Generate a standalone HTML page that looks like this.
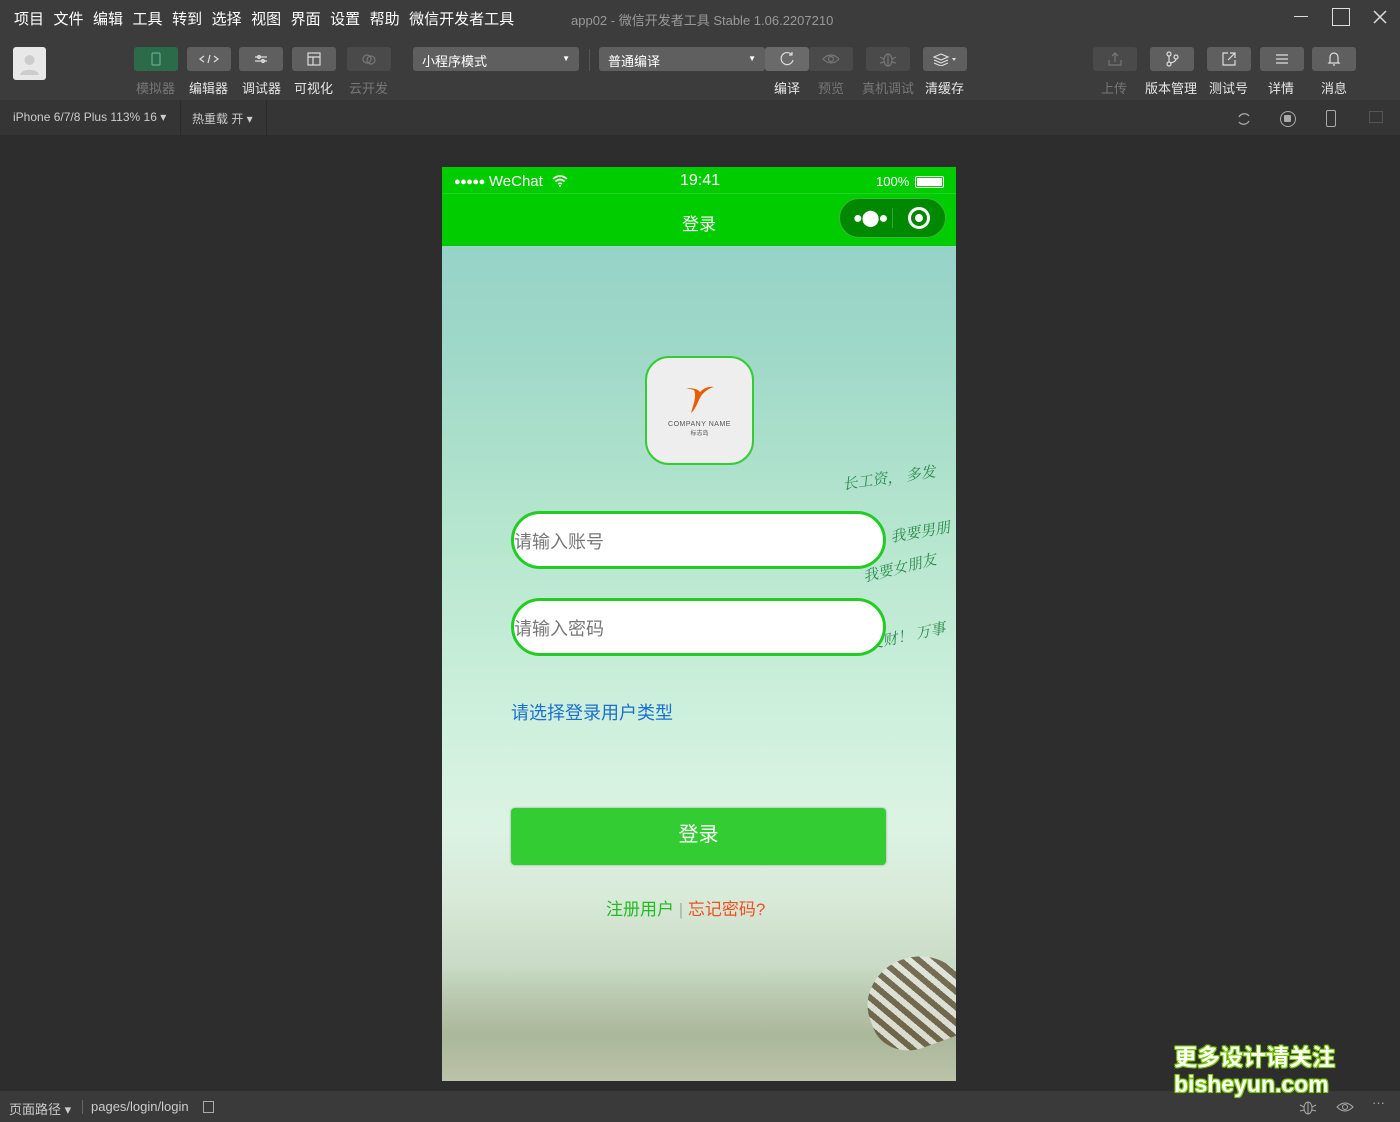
<!DOCTYPE html>
<html><head><meta charset="utf-8"><style>
*{margin:0;padding:0;box-sizing:border-box}
body{width:1400px;height:1122px;background:#2d2d2d;font-family:"Liberation Sans","Noto Sans CJK SC",sans-serif;position:relative;overflow:hidden;color:#ddd}
.abs{position:absolute}
#top{left:0;top:0;width:1400px;height:100px;background:#3c3c3c}
#menu{left:14px;top:8px;font-size:15px;color:#fff;white-space:nowrap}
#menu span{margin-right:9.5px}
#title{left:571px;top:10px;font-size:13px;color:#999}
.tb{position:absolute;top:47px;width:44px;height:24px;background:#5f5f5f;border-radius:3px;display:flex;align-items:center;justify-content:center}
.tb svg{stroke:#ddd;fill:none;stroke-width:1.2}
.d svg{stroke:#777}
.tl{position:absolute;top:78px;font-size:13px;color:#e6e6e6;white-space:nowrap}
.dim{color:#777}
.sel{position:absolute;top:47px;height:24px;background:#5f5f5f;border-radius:3px;font-size:13px;color:#fff;padding:4px 9px}
#sub{left:0;top:100px;width:1400px;height:35px;background:#353535;font-size:12px;color:#ccc}
#status{left:0;top:1091px;width:1400px;height:31px;background:#3a3a3a;font-size:13px;color:#ccc}
#phone{left:442px;top:167px;width:514px;height:914px;overflow:hidden;
background:linear-gradient(180deg,#8fcfc6 0%,#9fd8c8 20%,#b6e6cf 40%,#cdf0dc 60%,#dcf3e4 72%,#d8ead8 80%,#c4d6bf 90%,#b3c2a6 100%)}
#phone .hdr{left:0;top:0;width:514px;height:79px;background:#00cc00;color:#fff}
.inp{position:absolute;left:69px;width:375px;height:58px;background:#fff;border:3px solid #22cc22;border-radius:30px;font-size:18px;color:#777;padding:14px 0 0 0}
.cal{position:absolute;color:#2a8a4a;font-size:15px;font-style:italic;font-family:"Noto Serif CJK SC",serif;white-space:nowrap}
</style></head><body>
<div id="top" class="abs"></div>
<div id="menu" class="abs"><span>项目</span><span>文件</span><span>编辑</span><span>工具</span><span>转到</span><span>选择</span><span>视图</span><span>界面</span><span>设置</span><span>帮助</span><span>微信开发者工具</span></div>
<div id="title" class="abs">app02 - 微信开发者工具 Stable 1.06.2207210</div>
<div class="abs" style="left:1294px;top:16px;width:14px;height:1px;background:#ddd"></div>
<div class="abs" style="left:1332px;top:8px;width:18px;height:18px;border:1.5px solid #ddd"></div>
<svg class="abs" style="left:1373px;top:10px" width="14" height="14"><path d="M1 1L13 13M13 1L1 13" stroke="#ddd" stroke-width="1.5"/></svg>
<div class="abs" style="left:13px;top:47px;width:33px;height:33px;background:#e8e8e8;border-radius:3px"><svg width="33" height="33"><circle cx="16.5" cy="13" r="5" fill="#ccc"/><path d="M7 28c1-7 18-7 19 0z" fill="#ccc"/></svg></div>
<div class="tb" style="left:134px;background:#2b6b4a"><svg width="10" height="14"><rect x="1" y="1" width="8" height="12" rx="1" stroke="#6a9"/></svg></div>
<div class="tb" style="left:187px"><svg width="20" height="10"><path d="M5 2L1 5L5 8M15 2L19 5L15 8M11 1L9 9"/></svg></div>
<div class="tb" style="left:239px"><svg width="14" height="10"><path d="M1 3H13M1 7H13"/><circle cx="5" cy="3" r="1.5"/><circle cx="9" cy="7" r="1.5"/></svg></div>
<div class="tb" style="left:292px"><svg width="14" height="14"><rect x="1" y="1" width="12" height="12"/><path d="M1 5H13M6 5V13"/></svg></div>
<div class="tb d" style="left:347px;background:#4a4a4a"><svg width="16" height="12"><circle cx="6" cy="6" r="4"/><circle cx="10" cy="7" r="4"/></svg></div>
<div class="tl dim" style="left:136px">模拟器</div>
<div class="tl" style="left:189px">编辑器</div>
<div class="tl" style="left:242px">调试器</div>
<div class="tl" style="left:294px">可视化</div>
<div class="tl dim" style="left:349px">云开发</div>
<div class="sel" style="left:413px;width:166px">小程序模式<span style="float:right;font-size:8px;margin-top:3px">▼</span></div>
<div class="abs" style="left:589px;top:49px;width:1px;height:22px;background:#555"></div>
<div class="sel" style="left:599px;width:166px">普通编译<span style="float:right;font-size:8px;margin-top:3px">▼</span></div>
<div class="tb" style="left:765px;background:#6a6a6a"><svg width="16" height="16"><path d="M13 4A6 6 0 1 0 14 9M13 1V4H10"/></svg></div>
<div class="tb d" style="left:809px;background:#4a4a4a"><svg width="18" height="12"><path d="M1 6Q9 -2 17 6Q9 14 1 6Z"/><circle cx="9" cy="6" r="2.5"/></svg></div>
<div class="tb d" style="left:866px;background:#4a4a4a"><svg width="18" height="16"><ellipse cx="9" cy="9" rx="4" ry="6"/><path d="M9 3V15M1 6L5 8M17 6L13 8M1 12L5 11M17 12L13 11"/></svg></div>
<div class="tb" style="left:923px"><svg width="26" height="14"><path d="M2 5L9 2L16 5L9 8Z M2 8L9 11L16 8 M2 11L9 14L16 11"/><path d="M20 6L24 6L22 9Z" fill="#ddd" stroke="none"/></svg></div>
<div class="tl" style="left:774px">编译</div>
<div class="tl dim" style="left:818px">预览</div>
<div class="tl dim" style="left:862px">真机调试</div>
<div class="tl" style="left:925px">清缓存</div>
<div class="tb d" style="left:1093px;background:#4a4a4a"><svg width="14" height="14"><path d="M7 10V1M4 4L7 1L10 4M1 8V13H13V8"/></svg></div>
<div class="tb" style="left:1150px"><svg width="14" height="16"><circle cx="4" cy="3" r="2"/><circle cx="4" cy="13" r="2"/><circle cx="11" cy="6" r="2"/><path d="M4 5V11M11 8Q11 11 5 12"/></svg></div>
<div class="tb" style="left:1207px"><svg width="14" height="14"><path d="M6 1H1V13H13V8M8 1H13V6M13 1L6 8"/></svg></div>
<div class="tb" style="left:1260px"><svg width="14" height="12"><path d="M1 2H13M1 6H13M1 10H13"/></svg></div>
<div class="tb" style="left:1312px"><svg width="14" height="16"><path d="M3 11V6A4 4 0 0 1 11 6V11L12 12H2Z M6 14H8"/></svg></div>
<div class="tl dim" style="left:1101px">上传</div>
<div class="tl" style="left:1145px">版本管理</div>
<div class="tl" style="left:1209px">测试号</div>
<div class="tl" style="left:1268px">详情</div>
<div class="tl" style="left:1321px">消息</div>
<div id="sub" class="abs"><span class="abs" style="left:13px;top:10px">iPhone 6/7/8 Plus 113% 16 ▾</span><span class="abs" style="left:180px;top:0;width:1px;height:35px;background:#2a2a2a"></span><span class="abs" style="left:192px;top:10px">热重载 开 ▾</span><span class="abs" style="left:266px;top:0;width:1px;height:35px;background:#2a2a2a"></span>
<svg class="abs" style="left:1236px;top:11px" width="16" height="16"><path d="M3 6A6 6 0 0 1 13 5M13 10A6 6 0 0 1 3 11" stroke="#aaa" fill="none" stroke-width="1.3"/></svg>
<span class="abs" style="left:1280px;top:11px;width:16px;height:16px;border:1.5px solid #aaa;border-radius:50%"><span style="display:block;margin:3px;width:7px;height:7px;background:#aaa;border-radius:1px"></span></span>
<span class="abs" style="left:1326px;top:10px;width:10px;height:17px;border:1.5px solid #aaa;border-radius:2px"></span>
<span class="abs" style="left:1369px;top:11px;width:14px;height:12px;border:1px solid #555"></span></div>

<div id="phone" class="abs">
 <div class="abs hdr">
  <div class="abs" style="left:12px;top:6px;font-size:15px"><span style="font-size:11px;letter-spacing:-0.5px;vertical-align:1px">●●●●●</span> WeChat</div>
  <svg class="abs" style="left:110px;top:8px" width="16" height="12"><path d="M1 4Q8 -2 15 4M3.5 6.5Q8 2.5 12.5 6.5M6 9Q8 7.5 10 9" stroke="#fff" fill="none" stroke-width="1.6"/><circle cx="8" cy="11" r="1" fill="#fff"/></svg>
  <div class="abs" style="left:238px;top:5px;font-size:16px">19:41</div>
  <div class="abs" style="left:434px;top:7px;font-size:13px">100%</div>
  <div class="abs" style="left:473px;top:9px;width:29px;height:12px;border:1.5px solid #fff;border-radius:2px;padding:1px"><div style="background:#fff;height:100%"></div></div>
  <div class="abs" style="left:0;top:26px;width:514px;height:1px;background:#22d422"></div>
  <div class="abs" style="left:240px;top:43px;font-size:17px">登录</div>
  <div class="abs" style="left:397px;top:31px;width:107px;height:40px;background:#008800;border:1px solid #33bb33;border-radius:20px">
   <div class="abs" style="left:13px;top:9px;font-size:16px;letter-spacing:-1px">●⬤●</div>
   <div class="abs" style="left:52px;top:9px;width:1px;height:20px;background:#33aa33"></div>
   <div class="abs" style="left:68px;top:8px;width:22px;height:22px;border:3px solid #fff;border-radius:50%"><div style="margin:4px;width:8px;height:8px;background:#fff;border-radius:50%"></div></div>
  </div>
 </div>
 <div class="abs" style="left:203px;top:189px;width:109px;height:109px;background:#eee;border:2px solid #33cc33;border-radius:24px;text-align:center">
  <svg width="32" height="32" style="margin-top:26px" viewBox="0 0 32 32"><path d="M2 4l8 2c2 4 1 10-1 16l-2 7c5-4 7-12 10-17 3-4 8-8 13-9-5-1-10 1-14 5-2-3-7-4-14-4z" fill="#e85d00"/></svg>
  <div style="font-size:7px;color:#555;letter-spacing:.5px">COMPANY NAME</div><div style="font-size:6px;color:#555">标志岛</div>
 </div>
 <div class="cal" style="left:400px;top:300px;transform:rotate(-8deg)">长工资， 多发</div>
 <div class="cal" style="left:448px;top:354px;transform:rotate(-10deg)">我要男朋</div>
 <div class="cal" style="left:420px;top:390px;transform:rotate(-14deg)">我要女朋友</div>
 <div class="cal" style="left:425px;top:458px;transform:rotate(-12deg)">发财！ 万事</div>
 <div class="inp" style="top:344px">请输入账号</div>
 <div class="inp" style="top:431px">请输入密码</div>
 <div class="abs" style="left:69px;top:532px;font-size:18px;color:#1a6fd0">请选择登录用户类型</div>
 <div class="abs" style="left:69px;top:641px;width:375px;height:57px;background:#33cc33;border-radius:4px;color:#fff;font-size:20px;text-align:center;line-height:55px;box-shadow:0 0 2px #999">登录</div>
 <div class="abs" style="left:164px;top:728px;font-size:17px;color:#22bb22">注册用户 <span style="color:#aaa">|</span> <span style="color:#f05020">忘记密码?</span></div>
 <div class="abs" style="left:0;top:800px;width:514px;height:114px;background:linear-gradient(180deg,rgba(180,195,170,0) 0%,rgba(160,170,140,.6) 60%,rgba(190,195,170,.7) 100%)"></div>
 <div class="abs" style="left:425px;top:790px;width:100px;height:90px;border-radius:50% 50% 20% 40%;background:repeating-linear-gradient(60deg,#5a4a30 0 6px,#e8e8e0 6px 12px);transform:rotate(-20deg);opacity:.75"></div>
</div>
<div id="status" class="abs"><span class="abs" style="left:9px;top:8px">页面路径 ▾</span><span class="abs" style="left:82px;top:9px;width:1px;height:14px;background:#666"></span><span class="abs" style="left:91px;top:8px">pages/login/login</span><span class="abs" style="left:203px;top:10px;width:11px;height:12px;border:1.5px solid #aaa"></span>
<svg class="abs" style="left:1299px;top:8px" width="18" height="16"><ellipse cx="9" cy="9" rx="4" ry="6" stroke="#aaa" fill="none"/><path d="M9 3V15M1 6L5 8M17 6L13 8M1 12L5 11M17 12L13 11" stroke="#aaa"/></svg>
<svg class="abs" style="left:1336px;top:10px" width="18" height="12"><path d="M1 6Q9 -2 17 6Q9 14 1 6Z" stroke="#aaa" fill="none"/><circle cx="9" cy="6" r="2.5" stroke="#aaa" fill="none"/></svg>
<span class="abs" style="left:1372px;top:4px;color:#aaa">···</span></div>
<div class="abs" style="left:1174px;top:1044px;font-size:23px;font-weight:bold;color:#fff;text-shadow:0 0 2px #7c0,1px 1px 0 #7c0,-1px -1px 0 #7c0,1px -1px 0 #7c0,-1px 1px 0 #7c0;line-height:27px">更多设计请关注<br>bisheyun.com</div>
</body></html>
